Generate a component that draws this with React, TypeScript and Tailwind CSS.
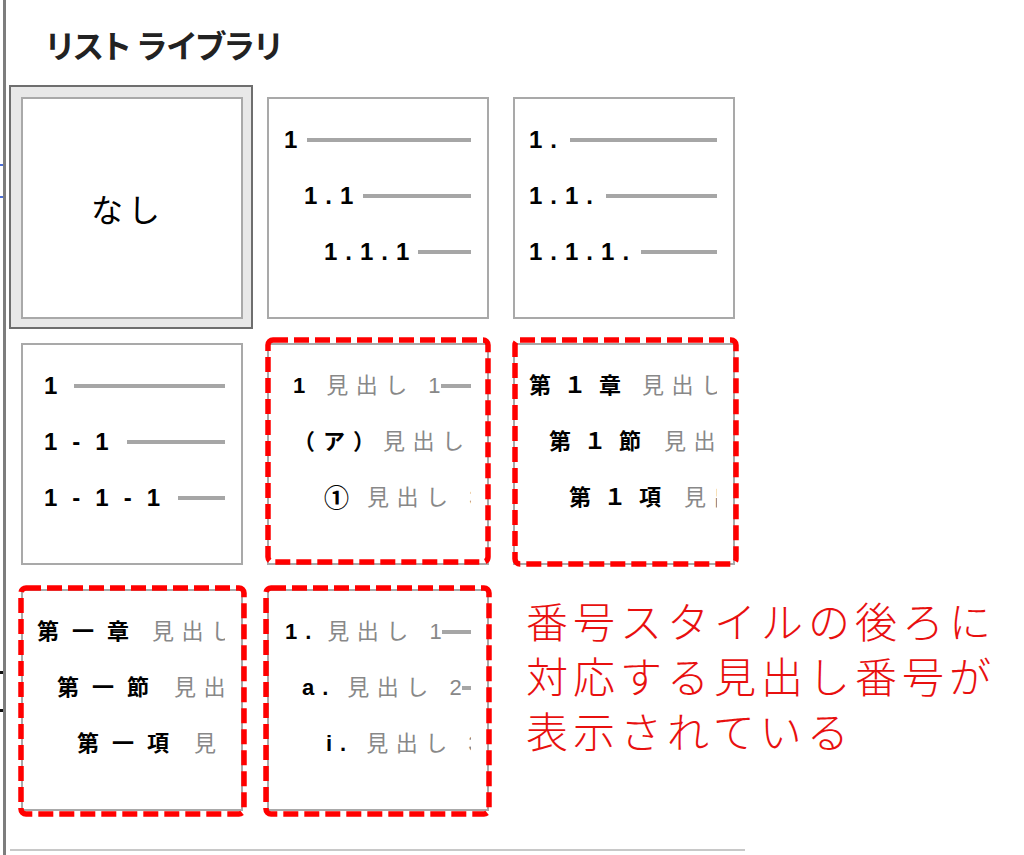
import React from "react";

const FONT = "font-['Liberation_Sans','Noto_Sans_CJK_JP',sans-serif]";

function Bar({ className = "" }: { className?: string }) {
  return <div className={`h-[4px] bg-[#a6a6a6] ${className}`} />;
}

function Dashed({ className, w, h }: { className: string; w: number; h: number }) {
  return (
    <svg className={`absolute pointer-events-none ${className}`} width={w} height={h}>
      <rect
        x={3}
        y={3}
        width={w - 6}
        height={h - 6}
        rx={5}
        fill="none"
        stroke="#ff0000"
        strokeWidth={5.5}
        strokeDasharray="15 6"
      />
    </svg>
  );
}

function Tile({ children, className = "" }: { children?: React.ReactNode; className?: string }) {
  return (
    <div className={`w-[222px] h-[222px] border-2 border-[#a9a9a9] bg-white overflow-hidden ${className}`}>
      {children}
    </div>
  );
}

function Cell({ children }: { children: React.ReactNode }) {
  return <div className="relative pt-[12px] pl-[12px] pr-[10px] pb-[10px]">{children}</div>;
}

/* one numbered row: black label, then a gray rule to the right */
function NumRow({
  pad,
  label,
  gap,
  track = "tracking-[8px]",
}: {
  pad: string;
  label: string;
  gap: string;
  track?: string;
}) {
  return (
    <div className={`flex items-center h-[56px] pr-[16px] ${pad}`}>
      <span className={`${FONT} font-bold text-[24px] leading-none text-black whitespace-nowrap ${track}`}>
        {label}
      </span>
      <Bar className={`flex-1 ${gap}`} />
    </div>
  );
}

/* heading row: black label, gray heading text, clipped at the right */
function HeadRow({
  pad,
  label,
  labelCls,
  gap,
  text,
}: {
  pad: string;
  label: string;
  labelCls: string;
  gap: string;
  text: string;
}) {
  return (
    <div className="flex h-[56px] pr-[16px]">
      <div className={`flex-1 flex items-center overflow-hidden whitespace-nowrap ${pad}`}>
        <span className={`${FONT} font-bold leading-none text-black shrink-0 ${labelCls}`}>{label}</span>
        <span className={`${FONT} text-[22px] leading-none tracking-[7.5px] text-[#888888] shrink-0 ${gap}`}>
          {text}
        </span>
        <Bar className="w-[80px] shrink-0 ml-[-7px]" />
      </div>
    </div>
  );
}

export default function App() {
  return (
    <div className="relative w-[1024px] h-[855px] bg-white overflow-hidden flex">
      {/* left gutter with ruler ticks */}
      <div className="relative w-[3px] shrink-0">
        <div className="absolute left-0 top-[164px] w-[3px] h-[2px] bg-[#4d6fd6]" />
        <div className="absolute left-0 top-[196px] w-[3px] h-[2px] bg-[#4d6fd6]" />
        <div className="absolute left-0 top-[671px] w-[3px] h-[3px] bg-[#111]" />
        <div className="absolute left-0 top-[709px] w-[3px] h-[3px] bg-[#111]" />
      </div>
      <div className="w-[3px] shrink-0 bg-[#7d7d7d]" />

      <div className="flex-1 flex flex-col pl-[3px]">
        {/* section heading */}
        <div className="mt-[22px] h-[43px] pl-[37px] flex items-center">
          <span className="font-['Noto_Sans_CJK_JP',sans-serif] [font-feature-settings:'palt'] font-bold text-[32px] leading-none text-[#222]">
            リスト ライブラリ
          </span>
        </div>

        {/* numbering gallery */}
        <div className="mt-[20px] grid grid-cols-[244px_244px_244px] grid-rows-[244px_244px_244px] gap-[2px]">
          {/* none (selected) */}
          <div className="border-2 border-[#6e6e6e] bg-[#e8e8e8] pt-[10px] pl-[10px] pr-[8px] pb-[8px]">
            <Tile className="flex items-center justify-center pr-[8px]">
              <span className="font-['Noto_Sans_CJK_JP',sans-serif] text-[32px] leading-none tracking-[5px] text-black">
                なし
              </span>
            </Tile>
          </div>

          <Cell>
            <Tile className="pt-[13px]">
              <NumRow pad="pl-[15px]" label="1" gap="ml-[2px]" />
              <NumRow pad="pl-[35px]" label="1.1" gap="ml-[2px]" />
              <NumRow pad="pl-[55px]" label="1.1.1" gap="ml-[1px]" />
            </Tile>
          </Cell>

          <Cell>
            <Tile className="pt-[13px]">
              <NumRow pad="pl-[14px]" label="1." gap="ml-[5px]" />
              <NumRow pad="pl-[14px]" label="1.1." gap="ml-[5px]" />
              <NumRow pad="pl-[14px]" label="1.1.1." gap="ml-[4px]" />
            </Tile>
          </Cell>

          <Cell>
            <Tile className="pt-[13px]">
              <NumRow pad="pl-[21px]" label="1" gap="ml-[2px]" track="tracking-[15px]" />
              <NumRow pad="pl-[21px]" label="1-1" gap="ml-[3px]" track="tracking-[15px]" />
              <NumRow pad="pl-[21px]" label="1-1-1" gap="ml-[3px]" track="tracking-[15px]" />
            </Tile>
          </Cell>

          <Cell>
            <Tile className="pt-[13px]">
              <HeadRow pad="pl-[24px]" label="1" labelCls="text-[22px] tracking-[8px]" gap="ml-[13px]" text="見出し 1" />
              <HeadRow pad="pl-[24px]" label="（ア）" labelCls="text-[22px] tracking-[8px]" gap="ml-[0px]" text="見出し 2" />
              <HeadRow pad="pl-[55px]" label="①" labelCls="text-[25px] tracking-[8px]" gap="ml-[10px]" text="見出し 3" />
            </Tile>
            <Dashed className="left-[10px] top-[6px]" w={226} h={228} />
          </Cell>

          <Cell>
            <Tile className="pt-[13px]">
              <HeadRow pad="pl-[14px]" label="第１章" labelCls="text-[22px] tracking-[13px]" gap="ml-[8px]" text="見出し 1" />
              <HeadRow pad="pl-[34px]" label="第１節" labelCls="text-[22px] tracking-[13px]" gap="ml-[10px]" text="見出し 2" />
              <HeadRow pad="pl-[54px]" label="第１項" labelCls="text-[22px] tracking-[13px]" gap="ml-[10px]" text="見出し 3" />
            </Tile>
            <Dashed className="left-[11px] top-[6px]" w={227} h={230} />
          </Cell>

          <Cell>
            <Tile className="pt-[13px]">
              <HeadRow pad="pl-[14px]" label="第一章" labelCls="text-[22px] tracking-[13px]" gap="ml-[10px]" text="見出し 1" />
              <HeadRow pad="pl-[34px]" label="第一節" labelCls="text-[22px] tracking-[13px]" gap="ml-[12px]" text="見出し 2" />
              <HeadRow pad="pl-[54px]" label="第一項" labelCls="text-[22px] tracking-[13px]" gap="ml-[12px]" text="見出し 3" />
            </Tile>
            <Dashed className="left-[9px] top-[8px]" w={229} h={232} />
          </Cell>

          <Cell>
            <Tile className="pt-[13px]">
              <HeadRow pad="pl-[16px]" label="1." labelCls="text-[22px] tracking-[8px]" gap="ml-[8px]" text="見出し 1" />
              <HeadRow pad="pl-[33px]" label="a." labelCls="text-[22px] tracking-[8px]" gap="ml-[11px]" text="見出し 2" />
              <HeadRow pad="pl-[57px]" label="i." labelCls="text-[22px] tracking-[8px]" gap="ml-[12px]" text="見出し 3" />
            </Tile>
            <Dashed className="left-[8px] top-[8px]" w={229} h={232} />
          </Cell>

          {/* note beside the gallery */}
          <div className="pt-[15px] pl-[25px] whitespace-nowrap font-['Noto_Sans_CJK_JP',sans-serif] font-light text-[42px] leading-[55px] tracking-[5px] text-[#e8100f]">
            <div>番号スタイルの後ろに</div>
            <div>対応する見出し番号が</div>
            <div>表示されている</div>
          </div>
        </div>

        <div className="mt-[28px] ml-[1px] w-[735px] h-[2px] bg-[#c8c8c8]" />
      </div>
    </div>
  );
}
